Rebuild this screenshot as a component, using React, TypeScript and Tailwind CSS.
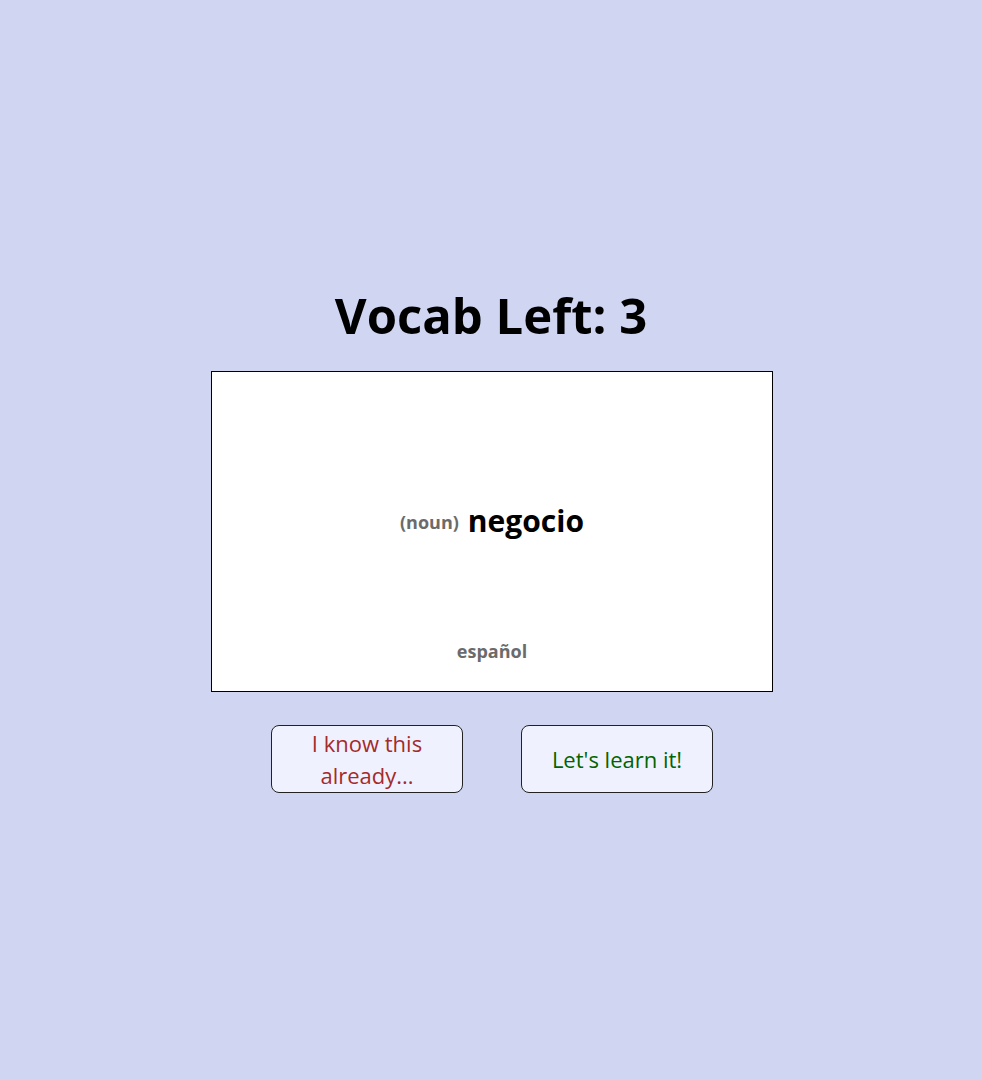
export default function App() {
  return (
    <div
      className="min-h-screen w-full bg-[#d0d6f2] flex flex-col items-center justify-center"
      style={{ fontFamily: '"Open Sans", "Noto Sans", sans-serif' }}
    >
      <h1 className="text-[49px] font-bold leading-[56px] text-black">Vocab Left: 3</h1>

      {/* Card */}
      <div className="mt-[28px] ml-[2px] w-[562px] h-[321px] bg-white border border-black flex flex-col">
        <div className="flex-1 flex items-center justify-center pt-[30px]">
          <span className="text-[18px] font-bold text-[#6b6b6b] mr-[9px] mt-[4px]">(noun)</span>
          <span className="text-[30px] font-bold text-black">negocio</span>
        </div>
        <div className="pb-[26px] text-center text-[18px] font-bold text-[#6b6b6b]">español</div>
      </div>

      {/* Buttons */}
      <div className="mt-[33px] ml-[2px] flex gap-[58px]">
        <button className="w-[192px] h-[68px] bg-[#eff2fe] border border-[#222] rounded-[8px] text-[22px] leading-[32px] text-[#a52a2a] px-3">
          I know this already...
        </button>
        <button className="w-[192px] h-[68px] bg-[#eff2fe] border border-[#222] rounded-[8px] text-[22px] leading-[32px] text-[#006400] px-3">
          Let's learn it!
        </button>
      </div>
    </div>
  )
}
